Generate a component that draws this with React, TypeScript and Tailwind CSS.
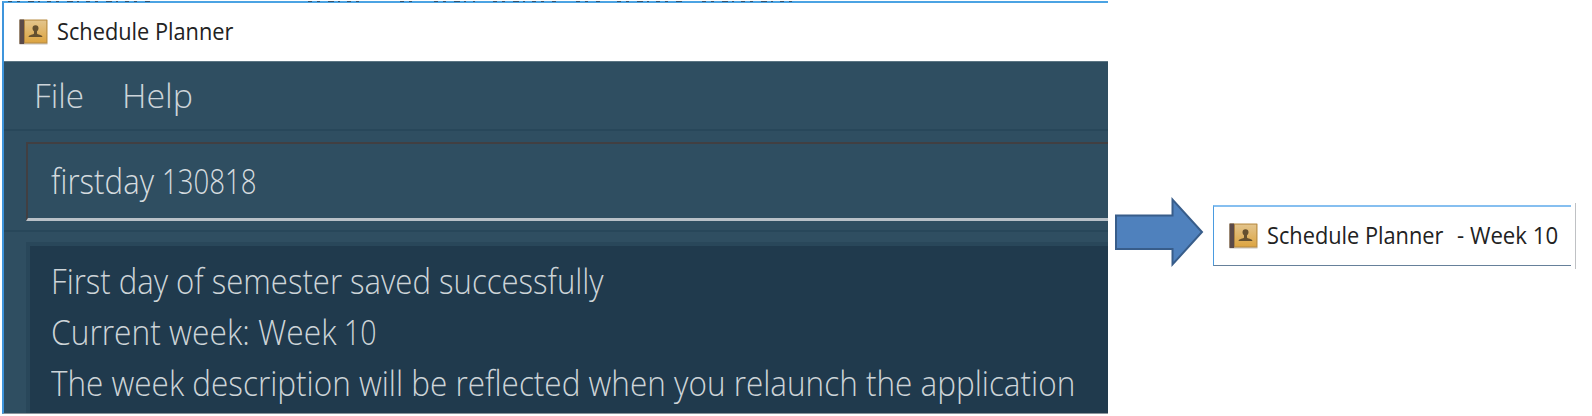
import type { ReactNode } from "react";

function BookIcon() {
  return (
    <svg viewBox="0 0 29 26" className="h-[26px] w-[29px] shrink-0">
      <defs>
        <linearGradient id="cover" x1="0" y1="0" x2="0" y2="1">
          <stop offset="0" stopColor="#e3c48c" />
          <stop offset="1" stopColor="#dda542" />
        </linearGradient>
      </defs>
      <rect x="0.5" y="24" width="28" height="1.6" fill="#cfcbc6" />
      <rect x="0.5" y="0.5" width="28" height="24" rx="0.6" fill="#b98d45" />
      <rect x="6" y="1.6" width="21.3" height="21.8" fill="url(#cover)" />
      <rect x="0.5" y="0.5" width="4.6" height="24.5" fill="#5b4a49" />
      <path d="M16.5 6.3c2 0 3 1.2 3 2.900 0 1.300-.7 2.200-1.500 3.100v2.100c.3 1.300 5.200.9 5.500 3.700H9.500c.3-2.800 5.200-2.400 5.500-3.700v-2.100c-.8-.9-1.500-1.800-1.500-3.100 0-1.700 1-2.900 3-2.900z" fill="#65502f" />
    </svg>
  );
}

function Line({ className, children }: { className: string; children: ReactNode }) {
  return <span className={`inline-block shrink-0 origin-left whitespace-pre ${className}`}>{children}</span>;
}

export default function App() {
  return (
    <div className="relative flex h-[416px] w-[1592px] items-start overflow-hidden bg-white pl-[2px] font-['Open_Sans',sans-serif]">
      <div className="mt-[1px] flex h-[413px] w-[1106px] shrink-0 flex-col overflow-hidden border-b border-l-2 border-t-2 border-b-[#8a949c] border-l-[#3f95dc] border-t-[#4ba3e3] bg-[#2f4e61]">
        <div className="flex h-[58px] shrink-0 items-center bg-white pl-[15px] text-[23px] text-[#222]">
          <BookIcon />
          <Line className="mb-[2px] ml-[9px] scale-x-[0.946]">Schedule Planner</Line>
        </div>
        <div className="flex h-[68px] shrink-0 items-center border-t border-[#5c7583] pl-[30px] text-[33px] font-light text-[#ccd4d9]">
          <Line className="w-[88px] scale-x-[1.01]">File</Line>
          <Line className="scale-x-[1.03]">Help</Line>
        </div>
        <div className="h-[103px] shrink-0 border-y-2 border-[#28475a] pl-[22px] pt-[11px]">
          <div className="flex h-[79px] items-center border-b-[3px] border-l-2 border-t-2 border-b-[#b9c1c8] border-l-[#413f42] border-t-[#413f42] pl-[23px] text-[34px] font-light text-[#d5dbdf]">
            <Line className="w-[111px] scale-x-[0.918]">firstday</Line>
            <Line className="scale-x-[0.812]">130818</Line>
          </div>
        </div>
        <div className="flex-1 pl-[22px] pt-[10px]">
          <div className="h-full border-l-4 border-t-4 border-[#29475a] bg-[#203a4d] pl-[21px] pt-[10px] text-[34px] leading-[51px] font-light text-[#cdd4d8]">
            <div><Line className="scale-x-[0.915]">First day of semester saved successfully</Line></div>
            <div className="flex">
              <Line className="w-[293px] scale-x-[0.933]">Current week: Week</Line>
              <Line className="scale-x-[0.84]">10</Line>
            </div>
            <div><Line className="scale-x-[0.926]">The week description will be reflected when you relaunch the application</Line></div>
          </div>
        </div>
      </div>
      <svg viewBox="0 0 90 72" className="ml-[6px] mt-[196px] h-[72px] w-[90px] shrink-0">
        <path d="M2 19.500H58.500V3.500L88 36L58.500 68.500V53H2Z" fill="#4f81bd" stroke="#385d8a" strokeWidth="2" />
      </svg>
      <div className="ml-[9px] mt-[205px] flex h-[61px] w-[358px] shrink-0 items-center border-b border-l border-t-2 border-b-[#66809a] border-l-[#4a9be0] border-t-[#86bff0] pb-px pl-[15px] text-[23px] text-[#222]">
        <BookIcon />
        <Line className="mb-px ml-[9px] w-[190px] scale-x-[0.946]">Schedule Planner</Line>
        <Line className="mb-px scale-x-[0.965]">- Week 10</Line>
      </div>
      <div className="ml-[4px] mt-[203px] h-[66px] w-px shrink-0 bg-[#bfc1c4]" />
      <svg viewBox="0 0 800 1" className="absolute left-0 top-px h-px w-[800px]">
        <path
          d="M8 .5H150M308 .5H362M400 .5H416M434 .5H475M493 .5H556M576 .5H600M617 .5H686M702 .5H793"
          stroke="#34536d"
          strokeWidth="1"
          strokeDasharray="4 5 3 8 6 4 2 7"
          fill="none"
        />
      </svg>
    </div>
  );
}
